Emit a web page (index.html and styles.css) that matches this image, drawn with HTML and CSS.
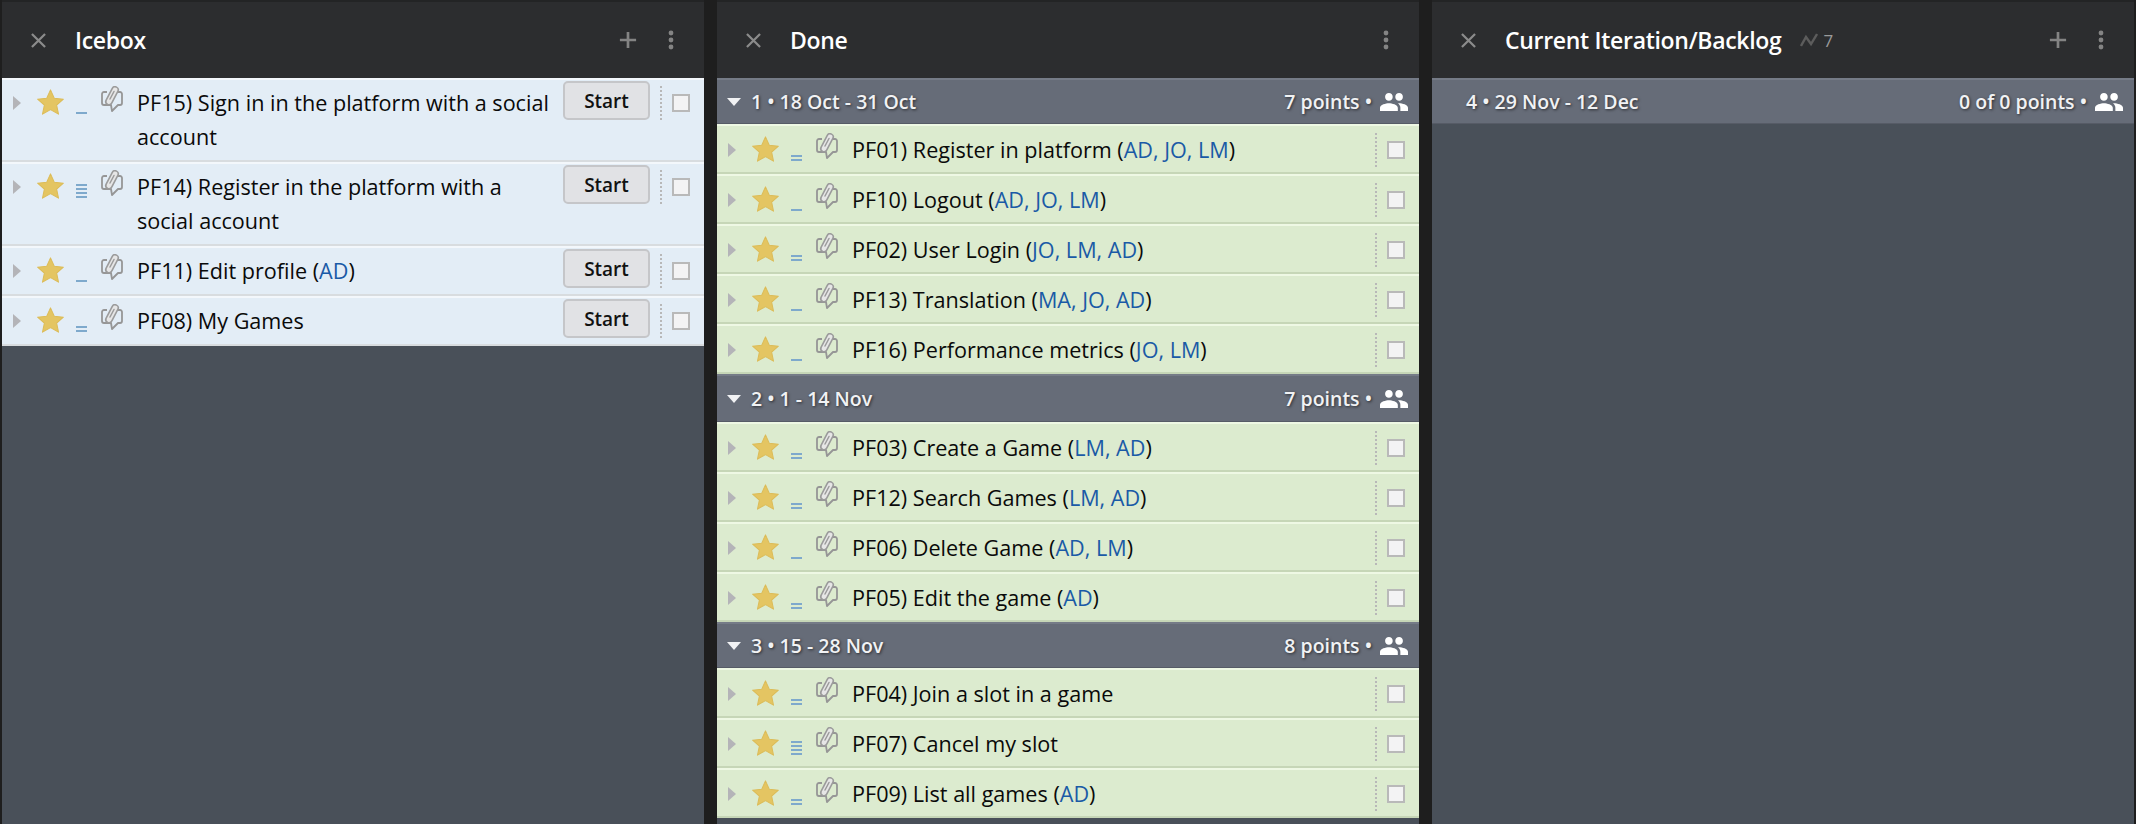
FILE: index.html
```html
<!DOCTYPE html>
<html lang="en">
<head>
    <meta charset="UTF-8">
    <title>Project Board</title>
    <link rel="stylesheet" href="styles.css">
</head>
<body>
    <svg class="icon-defs" width="0" height="0">
        <symbol id="i-close" viewBox="0 0 16 16"><path d="M1 1l14 14M15 1L1 15" fill="none" stroke="currentColor" stroke-width="2.400"/></symbol>
        <symbol id="i-plus" viewBox="0 0 20 20"><path d="M10 1v18M1 10h18" fill="none" stroke="currentColor" stroke-width="3"/></symbol>
        <symbol id="i-more" viewBox="0 0 6 20"><circle cx="3" cy="3" r="2.400"/><circle cx="3" cy="10" r="2.400"/><circle cx="3" cy="17" r="2.400"/></symbol>
        <symbol id="i-people" viewBox="1 5 22 14"><path d="M16 11c1.66 0 2.99-1.34 2.99-3S17.66 5 16 5c-1.66 0-3 1.34-3 3s1.34 3 3 3zm-8 0c1.66 0 2.99-1.34 2.99-3S9.66 5 8 5C6.34 5 5 6.34 5 8s1.34 3 3 3zm0 2c-2.33 0-7 1.17-7 3.5V19h14v-2.5c0-2.33-4.67-3.5-7-3.5zm8 0c-.29 0-.62.02-.97.05 1.16.84 1.97 1.97 1.97 3.45V19h6v-2.5c0-2.33-4.67-3.5-7-3.5z"/></symbol>
        <symbol id="i-star" viewBox="0 0 26 25"><path d="M13 .8l3.600 8 8.800 1-6.500 5.800 1.800 8.600-7.700-4.400-7.700 4.400 1.800-8.600L.6 9.800l8.800-1z" fill="#e4c562" stroke="#dcbc58" stroke-width="1" stroke-linejoin="round"/></symbol>
        <symbol id="i-note" viewBox="0 0 22 26">
            <path d="M6 6H3a2 2 0 0 0-2 2v9a2 2 0 0 0 2 2h7l1 6 6-6h2a2 2 0 0 0 2-2V8a2 2 0 0 0-2-2h-2" fill="none" stroke="#969696" stroke-width="1.800" stroke-linejoin="round"/>
            <path d="M8 15.500L14 4" fill="none" stroke="#9b9b9b" stroke-width="8" stroke-linecap="round"/>
            <path d="M8 15.500L14 4" fill="none" stroke="#e6e6e6" stroke-width="4.800" stroke-linecap="round"/>
            <path d="M9 13L13 5.500" fill="none" stroke="#9b9b9b" stroke-width="1.500" stroke-linecap="round"/>
        </symbol>
        <symbol id="i-velocity" viewBox="0 0 18 14"><path d="M1 13L6 4l5 7 6-10" fill="none" stroke="currentColor" stroke-width="2.400"/></symbol>
    </svg>

    <main class="board">
        <section class="panel">
            <header class="panel-head">
                <svg class="head-close"><use href="#i-close"/></svg>
                <h2 class="panel-title">Icebox</h2>
                <svg class="head-plus"><use href="#i-plus"/></svg>
                <svg class="head-more"><use href="#i-more"/></svg>
            </header>
            <div class="story ice">
                <span class="arrow"></span>
                <svg class="star"><use href="#i-star"/></svg>
                <span class="estimate"><i></i></span>
                <svg class="note"><use href="#i-note"/></svg>
                <span class="story-name">PF15) Sign in in the platform with a social account</span>
                <button class="start">Start</button>
                <span class="dots"></span>
                <span class="check"></span>
            </div>
            <div class="story ice">
                <span class="arrow"></span>
                <svg class="star"><use href="#i-star"/></svg>
                <span class="estimate"><i></i><i></i><i></i><i></i></span>
                <svg class="note"><use href="#i-note"/></svg>
                <span class="story-name">PF14) Register in the platform with a social account</span>
                <button class="start">Start</button>
                <span class="dots"></span>
                <span class="check"></span>
            </div>
            <div class="story ice">
                <span class="arrow"></span>
                <svg class="star"><use href="#i-star"/></svg>
                <span class="estimate"><i></i></span>
                <svg class="note"><use href="#i-note"/></svg>
                <span class="story-name">PF11) Edit profile (<a>AD</a>)</span>
                <button class="start">Start</button>
                <span class="dots"></span>
                <span class="check"></span>
            </div>
            <div class="story ice">
                <span class="arrow"></span>
                <svg class="star"><use href="#i-star"/></svg>
                <span class="estimate"><i></i><i></i></span>
                <svg class="note"><use href="#i-note"/></svg>
                <span class="story-name">PF08) My Games</span>
                <button class="start">Start</button>
                <span class="dots"></span>
                <span class="check"></span>
            </div>
        </section>

        <section class="panel">
            <header class="panel-head">
                <svg class="head-close"><use href="#i-close"/></svg>
                <h2 class="panel-title">Done</h2>
                <svg class="head-more"><use href="#i-more"/></svg>
            </header>

            <div class="iteration">
                <span class="caret"></span>
                <span class="iter-name">1 • 18 Oct - 31 Oct</span>
                <span class="iter-points">7 points •</span>
                <svg class="people"><use href="#i-people"/></svg>
            </div>
            <div class="story done">
                <span class="arrow"></span>
                <svg class="star"><use href="#i-star"/></svg>
                <span class="estimate"><i></i><i></i></span>
                <svg class="note"><use href="#i-note"/></svg>
                <span class="story-name">PF01) Register in platform (<a>AD, JO, LM</a>)</span>
                <span class="dots"></span>
                <span class="check"></span>
            </div>
            <div class="story done">
                <span class="arrow"></span>
                <svg class="star"><use href="#i-star"/></svg>
                <span class="estimate"><i></i></span>
                <svg class="note"><use href="#i-note"/></svg>
                <span class="story-name">PF10) Logout (<a>AD, JO, LM</a>)</span>
                <span class="dots"></span>
                <span class="check"></span>
            </div>
            <div class="story done">
                <span class="arrow"></span>
                <svg class="star"><use href="#i-star"/></svg>
                <span class="estimate"><i></i><i></i></span>
                <svg class="note"><use href="#i-note"/></svg>
                <span class="story-name">PF02) User Login (<a>JO, LM, AD</a>)</span>
                <span class="dots"></span>
                <span class="check"></span>
            </div>
            <div class="story done">
                <span class="arrow"></span>
                <svg class="star"><use href="#i-star"/></svg>
                <span class="estimate"><i></i></span>
                <svg class="note"><use href="#i-note"/></svg>
                <span class="story-name">PF13) Translation (<a>MA, JO, AD</a>)</span>
                <span class="dots"></span>
                <span class="check"></span>
            </div>
            <div class="story done">
                <span class="arrow"></span>
                <svg class="star"><use href="#i-star"/></svg>
                <span class="estimate"><i></i></span>
                <svg class="note"><use href="#i-note"/></svg>
                <span class="story-name">PF16) Performance metrics (<a>JO, LM</a>)</span>
                <span class="dots"></span>
                <span class="check"></span>
            </div>

            <div class="iteration tall">
                <span class="caret"></span>
                <span class="iter-name">2 • 1 - 14 Nov</span>
                <span class="iter-points">7 points •</span>
                <svg class="people"><use href="#i-people"/></svg>
            </div>
            <div class="story done">
                <span class="arrow"></span>
                <svg class="star"><use href="#i-star"/></svg>
                <span class="estimate"><i></i><i></i></span>
                <svg class="note"><use href="#i-note"/></svg>
                <span class="story-name">PF03) Create a Game (<a>LM, AD</a>)</span>
                <span class="dots"></span>
                <span class="check"></span>
            </div>
            <div class="story done">
                <span class="arrow"></span>
                <svg class="star"><use href="#i-star"/></svg>
                <span class="estimate"><i></i><i></i></span>
                <svg class="note"><use href="#i-note"/></svg>
                <span class="story-name">PF12) Search Games (<a>LM, AD</a>)</span>
                <span class="dots"></span>
                <span class="check"></span>
            </div>
            <div class="story done">
                <span class="arrow"></span>
                <svg class="star"><use href="#i-star"/></svg>
                <span class="estimate"><i></i></span>
                <svg class="note"><use href="#i-note"/></svg>
                <span class="story-name">PF06) Delete Game (<a>AD, LM</a>)</span>
                <span class="dots"></span>
                <span class="check"></span>
            </div>
            <div class="story done">
                <span class="arrow"></span>
                <svg class="star"><use href="#i-star"/></svg>
                <span class="estimate"><i></i><i></i></span>
                <svg class="note"><use href="#i-note"/></svg>
                <span class="story-name">PF05) Edit the game (<a>AD</a>)</span>
                <span class="dots"></span>
                <span class="check"></span>
            </div>

            <div class="iteration">
                <span class="caret"></span>
                <span class="iter-name">3 • 15 - 28 Nov</span>
                <span class="iter-points">8 points •</span>
                <svg class="people"><use href="#i-people"/></svg>
            </div>
            <div class="story done">
                <span class="arrow"></span>
                <svg class="star"><use href="#i-star"/></svg>
                <span class="estimate"><i></i><i></i></span>
                <svg class="note"><use href="#i-note"/></svg>
                <span class="story-name">PF04) Join a slot in a game</span>
                <span class="dots"></span>
                <span class="check"></span>
            </div>
            <div class="story done">
                <span class="arrow"></span>
                <svg class="star"><use href="#i-star"/></svg>
                <span class="estimate"><i></i><i></i><i></i><i></i></span>
                <svg class="note"><use href="#i-note"/></svg>
                <span class="story-name">PF07) Cancel my slot</span>
                <span class="dots"></span>
                <span class="check"></span>
            </div>
            <div class="story done">
                <span class="arrow"></span>
                <svg class="star"><use href="#i-star"/></svg>
                <span class="estimate"><i></i><i></i></span>
                <svg class="note"><use href="#i-note"/></svg>
                <span class="story-name">PF09) List all games (<a>AD</a>)</span>
                <span class="dots"></span>
                <span class="check"></span>
            </div>
        </section>

        <section class="panel">
            <header class="panel-head">
                <svg class="head-close"><use href="#i-close"/></svg>
                <h2 class="panel-title">Current Iteration/Backlog</h2>
                <span class="velocity">
                    <svg class="velocity-icon"><use href="#i-velocity"/></svg>7
                </span>
                <svg class="head-plus"><use href="#i-plus"/></svg>
                <svg class="head-more"><use href="#i-more"/></svg>
            </header>
            <div class="iteration current">
                <span class="iter-name">4 • 29 Nov - 12 Dec</span>
                <span class="iter-points">0 of 0 points •</span>
                <svg class="people"><use href="#i-people"/></svg>
            </div>
        </section>
    </main>
</body>
</html>
```

FILE: styles.css
```css
html, body {
    height: 100%;
}

body {
    margin: 0;
    background-color: #1e1e1e;
    font-family: "Open Sans", Arial, sans-serif;
    overflow: hidden;
}

.icon-defs {
    display: block;
    height: 0;
}

.board {
    display: grid;
    grid-template-columns: repeat(3, 1fr);
    gap: 13px;
    height: 100%;
    padding: 0 2px;
    box-sizing: border-box;
}

.panel {
    background-color: #495059;
    min-width: 0;
}

/* panel header */
.panel-head {
    display: flex;
    align-items: center;
    height: 76px;
    border-top: 2px solid #232425;
    background-color: #2c2d2f;
    padding: 0 30px 0 29px;
    color: #fff;
}

.panel-title {
    margin: 0 0 0 29px;
    font-size: 23px;
    font-weight: 600;
    letter-spacing: -0.3px;
}

.head-close {
    width: 15px;
    height: 15px;
    color: #8b8b8b;
}

.head-plus {
    width: 18px;
    height: 18px;
    margin-left: auto;
    color: #848484;
}

.head-more {
    width: 6px;
    height: 20px;
    margin-left: 31px;
    fill: #848484;
}

.panel-title + .head-more {
    margin-left: auto;
}

.velocity {
    display: flex;
    align-items: center;
    gap: 6px;
    margin-left: 18px;
    font-size: 17px;
    color: #9a9a9a;
}

.velocity-icon {
    width: 18px;
    height: 14px;
    color: #5c5c5c;
}

/* iteration bands */
.iteration {
    display: flex;
    align-items: center;
    height: 43px;
    border-top: 2px solid #757b87;
    border-bottom: 1px solid #565b66;
    background-color: #666c78;
    padding: 0 11px 0 10px;
    color: #f1f2f4;
    font-size: 19.500px;
    font-weight: 600;
    text-shadow: 1px 1px 3px rgba(0, 0, 0, 0.6);
}

.iteration.tall {
    height: 45px;
}

.iteration.current {
    padding-left: 34px;
}

.caret {
    width: 0;
    height: 0;
    margin-right: 10px;
    border-left: 7px solid transparent;
    border-right: 7px solid transparent;
    border-top: 8px solid #f1f2f4;
}

.iter-points {
    margin-left: auto;
}

.people {
    width: 28px;
    height: 18px;
    margin-left: 8px;
    fill: #fff;
}

/* stories */
.story {
    display: flex;
    align-items: flex-start;
    box-sizing: border-box;
    min-height: 50px;
    padding: 6px 14px 6px 11px;
    border-top: 2px solid;
    border-bottom: 2px solid;
    color: #0a0a0a;
    font-size: 21.600px;
    line-height: 34px;
}

.story.ice {
    background-color: #e3edf6;
    border-top-color: #f3f7fb;
    border-bottom-color: #d8dcdf;
}

.story.done {
    padding-top: 7px;
    padding-bottom: 5px;
    background-color: #dcebcf;
    border-top-color: #eef8e4;
    border-bottom-color: #c6d6b7;
}

.arrow {
    flex: none;
    width: 0;
    height: 0;
    margin-top: 10px;
    border-top: 7px solid transparent;
    border-bottom: 7px solid transparent;
    border-left: 8px solid #b4b4b8;
}

.star {
    flex: none;
    width: 27px;
    height: 26px;
    margin: 3px -1px 0 16px;
}

.estimate {
    flex: none;
    display: flex;
    flex-direction: column;
    justify-content: flex-end;
    gap: 1.500px;
    width: 11px;
    height: 28px;
    margin-left: 13px;
}

.estimate i {
    display: block;
    height: 2.500px;
    background-color: #7ea9cc;
}

.note {
    flex: none;
    width: 22px;
    height: 26px;
    margin: 0 0 0 14px;
}

.story-name {
    flex: 1;
    min-width: 0;
    margin-left: 14px;
}

.story-name a {
    color: #1a5aa6;
}

.start {
    flex: none;
    box-sizing: border-box;
    width: 87px;
    height: 39px;
    margin: -5px 0 0 8px;
    border: 2px solid #c5c6c9;
    border-radius: 5px;
    background-color: #e1e2e5;
    color: #111;
    font-family: inherit;
    font-size: 19px;
    font-weight: 600;
}

.dots {
    flex: none;
    height: 34px;
    margin-left: 10px;
    border-left: 2px dotted #b8b8b8;
}

.check {
    flex: none;
    box-sizing: border-box;
    width: 18px;
    height: 18px;
    margin: 8px 0 0 10px;
    border: 2px solid #b9b9b9;
    background-color: #f3f3f4;
}
```
